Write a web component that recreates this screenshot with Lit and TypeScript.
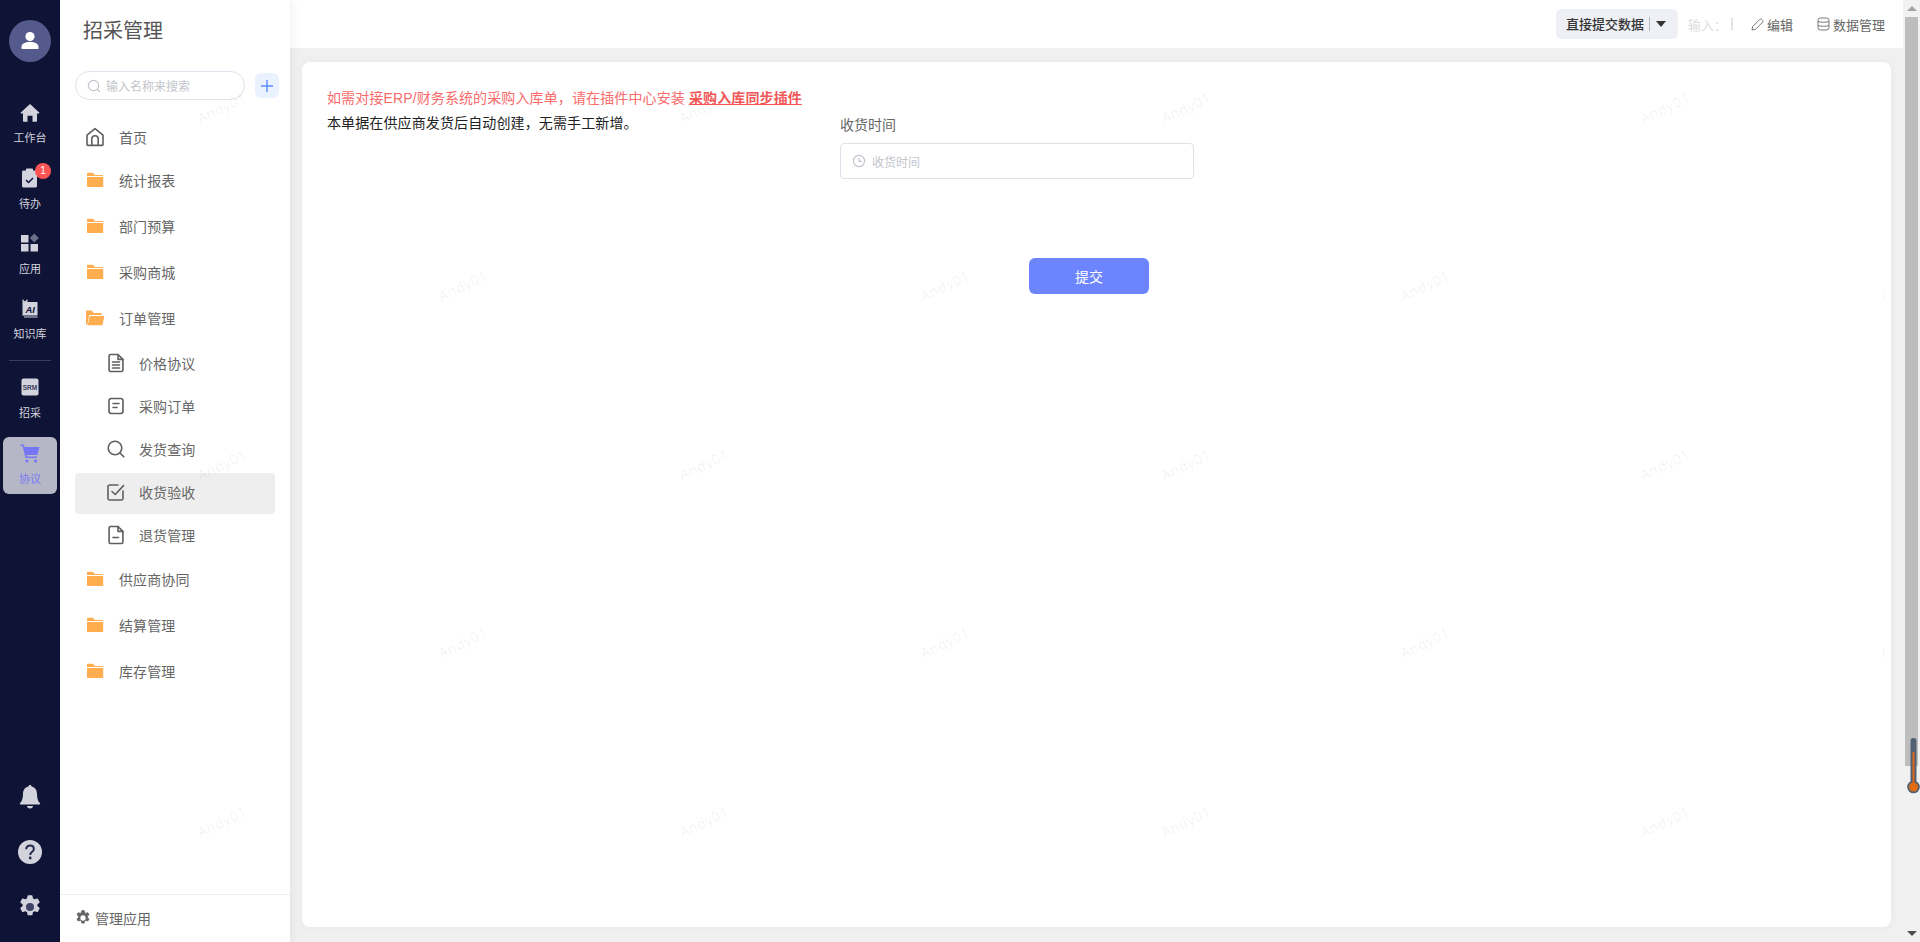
import { LitElement, html, css, svg } from "lit";
import { customElement } from "lit/decorators.js";

const folder = svg`<svg width="18" height="16" viewBox="0 0 18 16"><path fill="#ffad4f" d="M1 1.5C1 1 1.3.8 1.8.8h5L9 3H16.5c.4 0 .6.2.6.6v.4H1z"/><path fill="#ffad4f" d="M1 5h16.2v10H1.8C1.3 15 1 14.7 1 14.2z"/></svg>`;
const folderOpen = svg`<svg width="20" height="16" viewBox="0 0 20 16"><path fill="#ffad4f" d="M1 1.2C1 .8 1.3.6 1.7.6h5L8.8 3H16c.4 0 .7.3.7.7V5H4.2L2.4 14.5 1 15z"/><path fill="#ffad4f" d="M4.8 6H19.4L17.4 15.3H2.6z"/></svg>`;
const S = "fill:none;stroke:#5f5f5f;stroke-width:1.6;stroke-linecap:round;stroke-linejoin:round";

const icons: Record<string, unknown> = {
  home: svg`<svg width="20" height="20" viewBox="0 0 20 20"><path style=${S} d="M10 1.6 2 8.2V17.4c0 .6.4 1 1 1H17c.6 0 1-.4 1-1V8.2z"/><path style=${S} d="M6.8 18.2V12a3.2 3.2 0 0 1 6.4 0v6.2"/></svg>`,
  doc: svg`<svg width="18" height="20" viewBox="0 0 18 20"><path style=${S} d="M11 1.5H3.5c-.8 0-1.4.6-1.4 1.4v14.2c0 .8.6 1.4 1.4 1.4h11c.8 0 1.4-.6 1.4-1.4V6.4z"/><path style=${S} d="M11 1.6V6.4h4.8M5.5 9h7M5.500 12h7M5.500 15h7"/></svg>`,
  order: svg`<svg width="18" height="20" viewBox="0 0 18 20"><rect style=${S} x="2" y="2.5" width="14" height="15" rx="2.4"/><path style=${S} d="M6 7.5h6M6 11.5h4"/></svg>`,
  search: svg`<svg width="20" height="20" viewBox="0 0 20 20"><circle style=${S} cx="9" cy="9" r="6.8"/><path style=${S} d="m14.2 14.2 3.6 3.6"/></svg>`,
  check: svg`<svg width="20" height="20" viewBox="0 0 20 20"><path style=${S} d="M17 9v7.4c0 .9-.7 1.6-1.6 1.6H3.6C2.700 18 2 17.300 2 16.400V4.600C2 3.700 2.700 3 3.600 3H12"/><path style=${S} d="m6 9.500 3.200 3L17.500 3.600"/></svg>`,
  docminus: svg`<svg width="18" height="20" viewBox="0 0 18 20"><path style=${S} d="M11 1.500H3.500c-.8 0-1.400.6-1.400 1.400v14.200c0 .8.6 1.400 1.400 1.400h11c.8 0 1.400-.6 1.400-1.400V6.400z"/><path style=${S} d="M11 1.600V6.400h4.800M6 12.500h5.500"/></svg>`,
};

type Menu = { t: string; i: string; sub?: boolean; active?: boolean };
const menu: Menu[] = [
  { t: "统计报表", i: "f" }, { t: "部门预算", i: "f" }, { t: "采购商城", i: "f" }, { t: "订单管理", i: "o" },
  { t: "价格协议", i: "doc", sub: true }, { t: "采购订单", i: "order", sub: true }, { t: "发货查询", i: "search", sub: true },
  { t: "收货验收", i: "check", sub: true, active: true }, { t: "退货管理", i: "docminus", sub: true },
  { t: "供应商协同", i: "f" }, { t: "结算管理", i: "f" }, { t: "库存管理", i: "f" },
];

const gearPath = "M10.300 1h3.400l.6 3a8 8 0 0 1 2 1.150l2.900-1 1.700 2.950-2.300 2a8 8 0 0 1 0 2.300l2.300 2-1.700 2.950-2.900-1a8 8 0 0 1-2 1.150l-.6 3h-3.400l-.6-3a8 8 0 0 1-2-1.150l-2.900 1-1.700-2.950 2.300-2a8 8 0 0 1 0-2.300l-2.300-2 1.700-2.950 2.900 1a8 8 0 0 1 2-1.150z";

const rows = [108, 286, 465, 643, 822];
const marks: { x: number; y: number }[] = [];
rows.forEach((y, r) => {
  const xs = r % 2 === 0 ? [222, 704, 1186, 1665] : [463, 945, 1425, 1905];
  xs.forEach((x) => marks.push({ x, y }));
});

@customElement("app-root")
export class AppRoot extends LitElement {
  static styles = css`
    :host { display: block; width: 1920px; height: 942px; overflow: hidden; position: relative; font-family: "Liberation Sans", "Noto Sans CJK SC", sans-serif; background: #f0f0f0; }
    * { box-sizing: border-box; }
    .app { display: flex; height: 942px; }
    .rail { width: 60px; flex: none; background: #0f1437; display: flex; flex-direction: column; align-items: center; padding-top: 20px; color: #d2d3dc; position: relative; z-index: 2; }
    .avatar { width: 42px; height: 42px; border-radius: 50%; background: #545b8c; display: flex; align-items: center; justify-content: center; margin-bottom: 35px; }
    .ri { position: relative; width: 54px; height: 57px; margin-bottom: 8px; border-radius: 6px; display: flex; flex-direction: column; align-items: center; padding-top: 4px; font-size: 11px; line-height: 16px; }
    .ri .ic { height: 24px; display: flex; align-items: center; justify-content: center; margin-bottom: 5px; }
    .ri + .ri .ic, .rdiv + .ri .ic { margin-bottom: 6px; }
    .ri.on { background: #b5b6c6; color: #7a7af5; margin-top: 1px; }
    .badge { position: absolute; left: 32px; top: 1px; width: 16px; height: 16px; border-radius: 50%; background: #ff5454; color: #fff; font-size: 10px; line-height: 16px; text-align: center; }
    .rdiv { width: 42px; height: 1px; background: #3a3e5c; margin: 3px 0 10px; }
    .rspace { flex: 1; }
    .rb { height: 55px; display: flex; align-items: center; justify-content: center; }
    .rbs { margin-bottom: 8px; }

    .side { width: 230px; flex: none; background: #fff; display: flex; flex-direction: column; box-shadow: 2px 0 8px rgba(0,0,0,.06); position: relative; z-index: 1; }
    .title { font-size: 20px; line-height: 28px; color: #555; margin: 17px 0 0 23px; }
    .sr { display: flex; align-items: center; margin: 26px 0 0 15px; gap: 10px; }
    .search { width: 170px; height: 29px; border: 1px solid #dfe1ec; border-radius: 15px; display: flex; align-items: center; padding-left: 11px; gap: 5px; font-size: 12px; color: #c3c5cc; }
    .plus { width: 24px; height: 25px; border-radius: 6px; background: #ebf2ff; display: flex; align-items: center; justify-content: center; }
    .menu { margin-top: 16px; flex: 1; }
    .mi { display: flex; align-items: center; height: 46px; margin: 0 15px; width: 200px; padding-left: 10px; font-size: 14px; color: #666; letter-spacing: .12px; }
    .mi.first { height: 41px; }
    .mi .mic { width: 20px; margin-right: 14px; display: flex; align-items: center; justify-content: center; flex: none; }
    .mi.sub { height: 41px; margin-top: 2px; padding-left: 31px; padding-bottom: 3px; border-radius: 4px; }
    .mi.sub .mic { width: 20px; margin-right: 13px; }
    .mi.sub:nth-child(6) { margin-top: 3px; }
    .mi.sub:nth-child(10) { margin-bottom: -1px; }
    .mi.active { background: #eee; }
    .foot { height: 48px; border-top: 1px solid #eee; display: flex; align-items: center; padding: 0 0 2px 15px; gap: 4px; font-size: 14px; color: #666; }

    .main { flex: 1; min-width: 0; display: flex; flex-direction: column; }
    .top { height: 48px; background: #fff; display: flex; align-items: center; justify-content: flex-end; padding-right: 18px; font-size: 13px; color: #666; flex: none; }
    .dd { width: 122px; height: 30px; background: #eef0f5; border-radius: 6px; display: flex; align-items: center; padding-left: 10px; color: #333; font-weight: 500; margin-right: 10px; margin-top: -1px; }
    .dd i { width: 1px; height: 14px; background: #bbb; margin: 0 6px 0 5px; }
    .caret { width: 0; height: 0; border: 5px solid transparent; border-top: 6px solid #333; border-bottom: 0; }
    .inp { color: #ddd; display: flex; align-items: center; margin-right: 18px; }
    .inp i { width: 2px; height: 12px; background: #e2e2e2; margin-left: 4px; }
    .act { display: flex; align-items: center; gap: 3px; }
    .act + .act { margin-left: 24px; }
    .body { flex: 1; padding: 14px 12px 15px 12px; min-height: 0; }
    .card { height: 100%; background: #fff; border-radius: 8px; padding: 25px; box-shadow: 0 0 10px rgba(0,0,0,.04); font-size: 14px; }
    .warn { line-height: 22px; color: #f96a6a; letter-spacing: .12px; }
    .warn b { color: #f25757; text-decoration: underline; font-weight: 700; }
    .row { display: flex; margin-top: 4px; }
    .left { width: 513px; color: #222; line-height: 22px; flex: none; margin-top: -1px; letter-spacing: .12px; }
    .label { color: #666; line-height: 22px; margin: 1px 0 7px; }
    .input { width: 354px; height: 36px; border: 1px solid #dfe1ea; border-radius: 4px; display: flex; align-items: center; padding-left: 11px; gap: 6px; font-size: 12px; color: #c3c5cc; }
    .btnrow { margin: 79px 0 0 702px; }
    .btn { width: 120px; height: 36px; background: #6c85ff; color: #fff; border-radius: 6px; display: flex; align-items: center; justify-content: center; padding-bottom: 1px; }

    .sb { width: 17px; flex: none; background: #f1f1f1; position: relative; display: flex; flex-direction: column; align-items: center; }
    .arr { height: 17px; width: 100%; display: flex; align-items: center; justify-content: center; flex: none; }
    .au { border: 5px solid transparent; border-bottom: 5px solid #a3a3a3; border-top: 0; }
    .ad { border: 5px solid transparent; border-top: 5px solid #505050; border-bottom: 0; }
    .thumb { width: 13px; height: 749px; background: #bdbdbd; flex: none; }
    .sbs { flex: 1; }

    .wm { position: absolute; left: 0; top: 0; width: 1884px; height: 942px; overflow: hidden; pointer-events: none; z-index: 3; }
    .wm span { position: absolute; width: 80px; margin-left: -40px; margin-top: -10px; text-align: center; font: 14px/20px "Open Sans", sans-serif; letter-spacing: .6px; color: rgba(0,0,0,.065); transform: rotate(-25deg); }
    .thermo { position: absolute; left: 1907px; top: 737px; z-index: 4; display: block; }
  `;

  render() {
    const light = "#d2d3dc";
    return html`
      <div class="app">
        <nav class="rail">
          <div class="avatar">
            <svg width="20" height="20" viewBox="0 0 20 20"><circle cx="10" cy="5.600" r="4.600" fill="#fff"/><path fill="#fff" d="M1.500 17.500v-1.800c0-3 3.500-4.700 8.500-4.700s8.500 1.700 8.500 4.700v1.800c0 .3-.2.5-.5.5H2c-.3 0-.5-.2-.5-.5z"/></svg>
          </div>
          <div class="ri"><div class="ic"><svg width="20" height="20" viewBox="0 0 20 20"><path fill=${light} d="M10 1 .8 9.600c-.3.3-.1.8.3.8H3v7.600c0 .4.3.7.7.7H7.500v-6h5v6h3.800c.4 0 .7-.3.7-.7v-7.600h1.900c.4 0 .6-.5.3-.8z"/></svg></div>工作台</div>
          <div class="ri"><div class="ic"><svg width="20" height="22" viewBox="0 0 20 22"><path fill=${light} d="M6 3.500H3.500C2.700 3.500 2 4.200 2 5v14c0 .8.7 1.500 1.500 1.500h12c.8 0 1.500-.7 1.500-1.500V5c0-.8-.7-1.500-1.500-1.500H13V2.500c0-.6-.4-1-1-1H7c-.6 0-1 .4-1 1z"/><path d="m6 13 2.500 2.500L13 11" fill="none" stroke="#0f1437" stroke-width="1.500"/></svg></div>待办<span class="badge">1</span></div>
          <div class="ri"><div class="ic"><svg width="20" height="20" viewBox="0 0 20 20"><rect x="1" y="2" width="7.500" height="7.500" fill=${light}/><rect x="1" y="11" width="7.500" height="7.500" fill=${light}/><rect x="10.500" y="11" width="7.500" height="7.500" fill=${light}/><path d="m14.300 .5 4.500 4.500-4.500 4.500-4.500-4.500z" fill="#6d7089"/></svg></div>应用</div>
          <div class="ri"><div class="ic"><svg width="20" height="20" viewBox="0 0 20 20"><path fill=${light} d="M2.500 1 5 3.500 7.500 1v3h10v13.500H4c-.8 0-1.500.4-1.500 1z"/><path d="M4 19h13.500" stroke=${light} stroke-width="1"/><text x="5.500" y="14.500" font-family="Liberation Sans" font-size="9.500" font-weight="700" font-style="italic" fill="#0f1437">AI</text></svg></div>知识库</div>
          <div class="rdiv"></div>
          <div class="ri"><div class="ic"><svg width="20" height="20" viewBox="0 0 20 20"><rect x="1.500" y="1.500" width="17" height="17" rx="2" fill=${light}/><text x="10" y="12.500" text-anchor="middle" font-family="Liberation Sans" font-size="6.500" font-weight="700" fill="#3b3f5c">SRM</text></svg></div>招采</div>
          <div class="ri on"><div class="ic"><svg width="20" height="20" viewBox="0 0 20 20"><path fill="#7676f6" d="M.5 1.500h3.300l.8 2.500H19.500l-2 8H6.500l.4 1.500H17v1.600H5.500L2.600 3H.5z"/><circle cx="7" cy="18" r="1.600" fill="#7676f6"/><circle cx="15.500" cy="18" r="1.600" fill="#7676f6"/></svg></div>协议</div>
          <div class="rspace"></div>
          <div class="rb"><svg width="22" height="26" viewBox="0 0 22 26"><path fill=${light} d="M11 1c.9 0 1.500.6 1.600 1.400 3.700.8 5.400 3.900 5.400 7.600 0 3.800.8 7 3 9.300.4.400.1 1.200-.5 1.200H1.500c-.6 0-.9-.8-.5-1.200 2.200-2.300 3-5.500 3-9.300 0-3.700 1.700-6.800 5.400-7.600C9.500 1.600 10.100 1 11 1z"/><path fill=${light} d="M8 22h6c0 1.500-1.300 2.500-3 2.500S8 23.500 8 22z"/></svg></div>
          <div class="rb"><svg width="24" height="24" viewBox="0 0 24 24"><circle cx="12" cy="12" r="12" fill=${light}/><path d="M8.200 9.300C8.200 7 9.900 5.600 12 5.600s3.800 1.300 3.800 3.300c0 1.500-.8 2.300-1.900 3.100-1.200.9-1.700 1.500-1.700 2.900" fill="none" stroke="#23274a" stroke-width="2"/><circle cx="12.200" cy="18" r="1.400" fill="#23274a"/></svg></div>
          <div class="rb rbs"><svg width="24" height="24" viewBox="0 0 24 24"><path d=${gearPath} fill=${light} stroke=${light} stroke-width="1.500" stroke-linejoin="round"/><circle cx="12" cy="12" r="4" fill="#3f4366"/></svg></div>
        </nav>

        <aside class="side">
          <div class="title">招采管理</div>
          <div class="sr">
            <div class="search"><svg width="14" height="14" viewBox="0 0 14 14"><circle cx="6.500" cy="6.500" r="5.200" fill="none" stroke="#c3c5cc" stroke-width="1.200"/><path d="m10.300 10.300 2.500 2.500" stroke="#c3c5cc" stroke-width="1.200"/></svg>输入名称来搜索</div>
            <div class="plus"><svg width="14" height="14" viewBox="0 0 14 14"><path d="M7 1v12M1 7h12" stroke="#5b8cff" stroke-width="1.400"/></svg></div>
          </div>
          <div class="menu">
            <div class="mi first"><span class="mic">${icons.home}</span>首页</div>
            ${menu.map((m) => html`<div class="mi ${m.sub ? "sub" : ""} ${m.active ? "active" : ""}"><span class="mic">${m.i === "f" ? folder : m.i === "o" ? folderOpen : icons[m.i]}</span>${m.t}</div>`)}
          </div>
          <div class="foot"><svg width="16" height="16" viewBox="0 0 24 24"><path d=${gearPath} fill="#666" stroke="#666" stroke-width="1.500" stroke-linejoin="round"/><circle cx="12" cy="12" r="4" fill="#fff"/></svg>管理应用</div>
        </aside>

        <main class="main">
          <header class="top">
            <div class="dd">直接提交数据<i></i><span class="caret"></span></div>
            <div class="inp">输入： <i></i></div>
            <div class="act"><svg width="13" height="13" viewBox="0 0 13 13"><path d="M1 12 1.600 8.600 8.800 1.400c.5-.5 1.300-.5 1.800 0l1 1c.5.500.5 1.300 0 1.800L4.400 11.400z" fill="none" stroke="#777" stroke-width="1"/></svg>编辑</div>
            <div class="act"><svg width="13" height="14" viewBox="0 0 13 14"><rect x="1" y="1" width="11" height="12" rx="2.500" fill="none" stroke="#777" stroke-width="1"/><path d="M1 4.500c2 1 9 1 11 0M1 8.500c2 1 9 1 11 0" fill="none" stroke="#777" stroke-width="1"/></svg>数据管理</div>
          </header>
          <div class="body">
            <section class="card">
              <div class="warn">如需对接ERP/财务系统的采购入库单，请在插件中心安装 <b>采购入库同步插件</b></div>
              <div class="row">
                <div class="left">本单据在供应商发货后自动创建，无需手工新增。</div>
                <div>
                  <div class="label">收货时间</div>
                  <div class="input"><svg width="14" height="14" viewBox="0 0 14 14"><circle cx="7" cy="7" r="5.600" fill="none" stroke="#c3c5cc" stroke-width="1.200"/><path d="M7 3.800V7.300H10" fill="none" stroke="#c3c5cc" stroke-width="1.200"/></svg>收货时间</div>
                </div>
              </div>
              <div class="btnrow"><div class="btn">提交</div></div>
            </section>
          </div>
        </main>

        <div class="sb">
          <div class="arr"><span class="au"></span></div>
          <div class="thumb"></div>
          <div class="sbs"></div>
          <div class="arr"><span class="ad"></span></div>
        </div>
      </div>

      <div class="wm">${marks.map((m) => html`<span style="left:${m.x}px;top:${m.y}px">Andy01</span>`)}</div>

      <svg class="thermo" width="13" height="60" viewBox="0 0 13 60">
        <rect x="3.500" y="1" width="6" height="48" rx="3" fill="#4f6172"/>
        <circle cx="6.500" cy="50" r="6.300" fill="#4f6172"/>
        <rect x="5.500" y="15" width="2" height="32" fill="#e0661a"/>
        <circle cx="6.500" cy="50" r="4.500" fill="#e26c0f"/>
      </svg>
    `;
  }
}
